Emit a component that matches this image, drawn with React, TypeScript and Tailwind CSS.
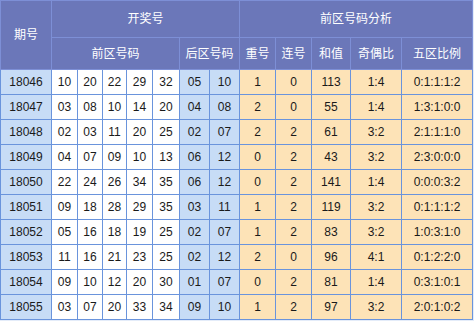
import React from 'react';

const rows: [string, string[], string[], string[]][] = [
    ['18046', ['10', '20', '22', '29', '32'], ['05', '10'], ['1', '0', '113', '1:4', '0:1:1:1:2']],
    ['18047', ['03', '08', '10', '14', '20'], ['04', '08'], ['2', '0', '55', '1:4', '1:3:1:0:0']],
    ['18048', ['02', '03', '11', '20', '25'], ['02', '07'], ['2', '2', '61', '3:2', '2:1:1:1:0']],
    ['18049', ['04', '07', '09', '10', '13'], ['06', '12'], ['0', '2', '43', '3:2', '2:3:0:0:0']],
    ['18050', ['22', '24', '26', '34', '35'], ['06', '12'], ['0', '2', '141', '1:4', '0:0:0:3:2']],
    ['18051', ['09', '18', '28', '29', '35'], ['03', '11'], ['1', '2', '119', '3:2', '0:1:1:1:2']],
    ['18052', ['05', '16', '18', '19', '25'], ['02', '07'], ['1', '2', '83', '3:2', '1:0:3:1:0']],
    ['18053', ['11', '16', '21', '23', '25'], ['02', '12'], ['2', '0', '96', '4:1', '0:1:2:2:0']],
    ['18054', ['09', '10', '12', '20', '30'], ['01', '07'], ['0', '2', '81', '1:4', '0:3:1:0:1']],
    ['18055', ['03', '07', '20', '33', '34'], ['09', '10'], ['1', '2', '97', '3:2', '2:0:1:0:2']],
];

const widths = [51, 26, 25, 24, 26, 27, 30, 30, 36, 36, 39, 51, 71];

const th = 'border border-[#7d8fd6] bg-[#6b77b9] text-white font-normal p-0 text-center';
const td = 'border border-[#6a94dc] p-0 text-center';

export default function App() {
    return (
        <div className="w-[474px] h-[321px] bg-[#e4ecf9] overflow-hidden" style={{ fontFamily: '"Liberation Sans", Arial, "Noto Sans CJK SC", sans-serif' }}>
            <table className="border-collapse table-fixed text-[12px] leading-none text-[#1a1a1a]">
                <colgroup>
                    {widths.map((w, i) => (
                        <col key={i} style={{ width: w }} />
                    ))}
                </colgroup>
                <thead>
                    <tr className="h-[37px]">
                        <th rowSpan={2} className={th}>期号</th>
                        <th colSpan={7} className={th}>开奖号</th>
                        <th colSpan={5} className={th}>前区号码分析</th>
                    </tr>
                    <tr className="h-[32px]">
                        <th colSpan={5} className={th}>前区号码</th>
                        <th colSpan={2} className={th}>后区号码</th>
                        <th className={th}>重号</th>
                        <th className={th}>连号</th>
                        <th className={th}>和值</th>
                        <th className={th}>奇偶比</th>
                        <th className={th}>五区比例</th>
                    </tr>
                </thead>
                <tbody>
                    {rows.map(([id, front, back, stats]) => (
                        <tr key={id} className="h-[25px]">
                            <td className={`${td} bg-[#c7dcf6]`}>{id}</td>
                            {front.map((n, i) => (
                                <td key={'f' + i} className={`${td} bg-white`}>{n}</td>
                            ))}
                            {back.map((n, i) => (
                                <td key={'b' + i} className={`${td} bg-[#c7dcf6]`}>{n}</td>
                            ))}
                            {stats.map((n, i) => (
                                <td key={'s' + i} className={`${td} bg-[#fde3b7]`}>{n}</td>
                            ))}
                        </tr>
                    ))}
                </tbody>
            </table>
        </div>
    );
}
